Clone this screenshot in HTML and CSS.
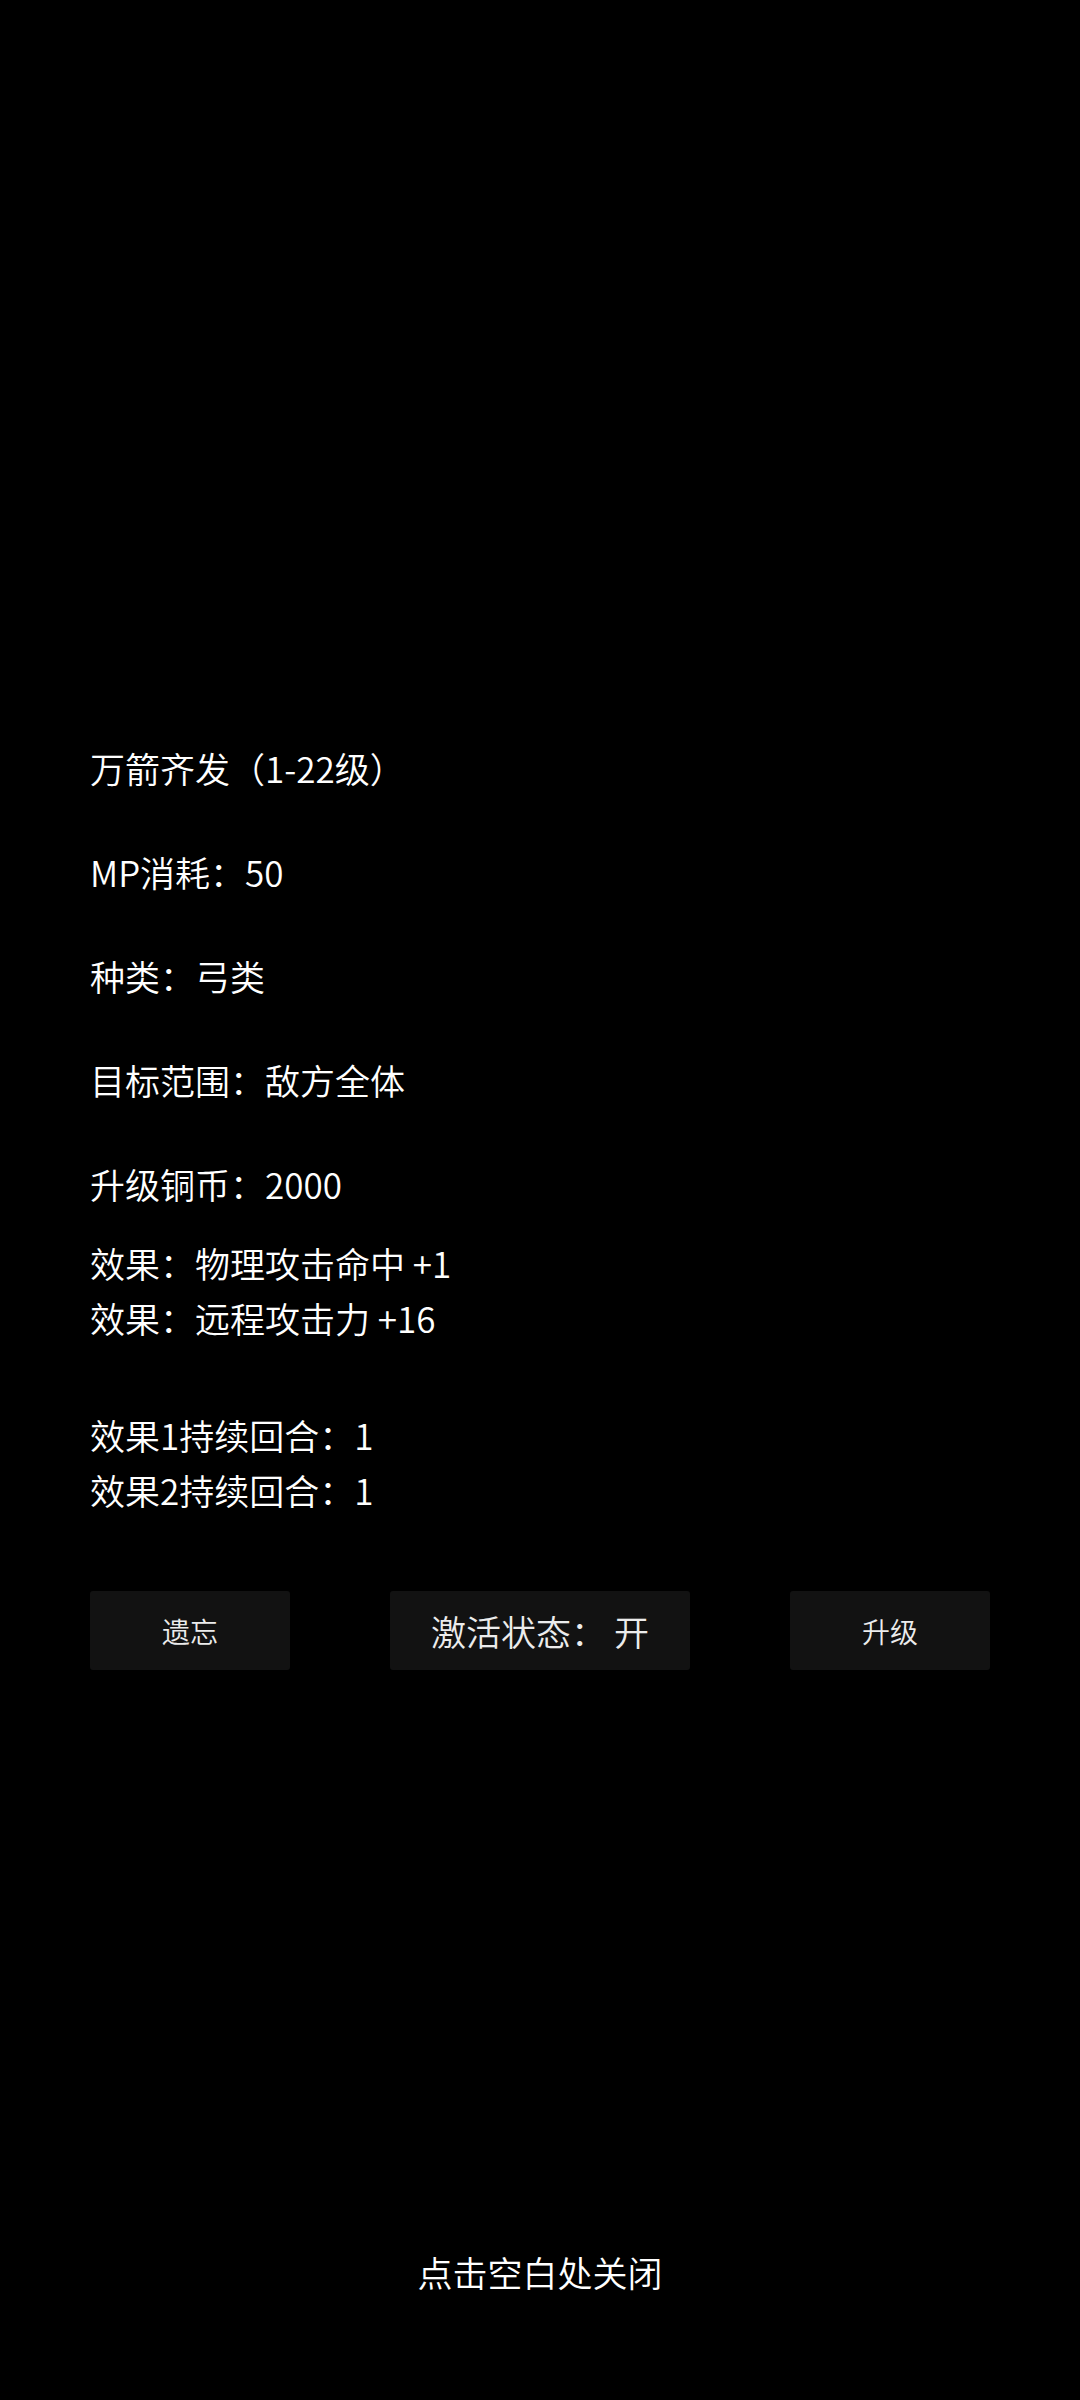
FILE: index.html
```html
<!DOCTYPE html>
<html lang="zh-CN">
<head>
<meta charset="utf-8">
<title>技能详情</title>
<link rel="stylesheet" href="styles.css">
</head>
<body>
<div class="page">
  <div class="panel">
    <div class="row">万箭齐发（1-22级）</div>
    <div class="row">MP消耗：50</div>
    <div class="row">种类：弓类</div>
    <div class="row">目标范围：敌方全体</div>
    <div class="row">升级铜币：2000</div>
    <div class="group effects">
      <div class="line">效果：物理攻击命中 +1</div>
      <div class="line">效果：远程攻击力 +16</div>
    </div>
    <div class="group durations">
      <div class="line">效果1持续回合：1</div>
      <div class="line">效果2持续回合：1</div>
    </div>
    <div class="actions">
      <div class="btn btn-small">遗忘</div>
      <div class="btn btn-wide">激活状态：&nbsp;开</div>
      <div class="btn btn-small">升级</div>
    </div>
  </div>
  <div class="footer">点击空白处关闭</div>
</div>
</body>
</html>
```
FILE: styles.css
```css
html, body {
  margin: 0;
  padding: 0;
  background: #000;
}

body {
  font-family: "Noto Sans CJK SC", "Noto Sans", sans-serif;
  font-weight: 350;
  color: #fff;
}

.page {
  width: 1080px;
  height: 2400px;
  display: flex;
  flex-direction: column;
  box-sizing: border-box;
}

.panel {
  padding: 740px 90px 0 90px;
  display: flex;
  flex-direction: column;
}

.row {
  font-size: 35px;
  line-height: 55px;
  height: 55px;
  margin-bottom: 49px;
  white-space: nowrap;
}

.row:nth-child(5) {
  margin-bottom: 24px;
}

.line {
  font-size: 35px;
  line-height: 55px;
  height: 55px;
  white-space: nowrap;
}

.effects {
  margin-bottom: 62px;
}

.actions {
  margin-top: 74px;
  display: flex;
  justify-content: space-between;
  align-items: center;
}

.btn {
  height: 79px;
  background: #121212;
  border-radius: 3px;
  display: flex;
  align-items: center;
  justify-content: center;
  color: #ececec;
}

.btn-small {
  width: 200px;
  font-size: 28px;
}

.btn-wide {
  width: 300px;
  font-size: 35px;
}

.footer {
  margin-top: auto;
  padding-bottom: 101px;
  text-align: center;
  font-size: 35px;
  line-height: 55px;
}
```
